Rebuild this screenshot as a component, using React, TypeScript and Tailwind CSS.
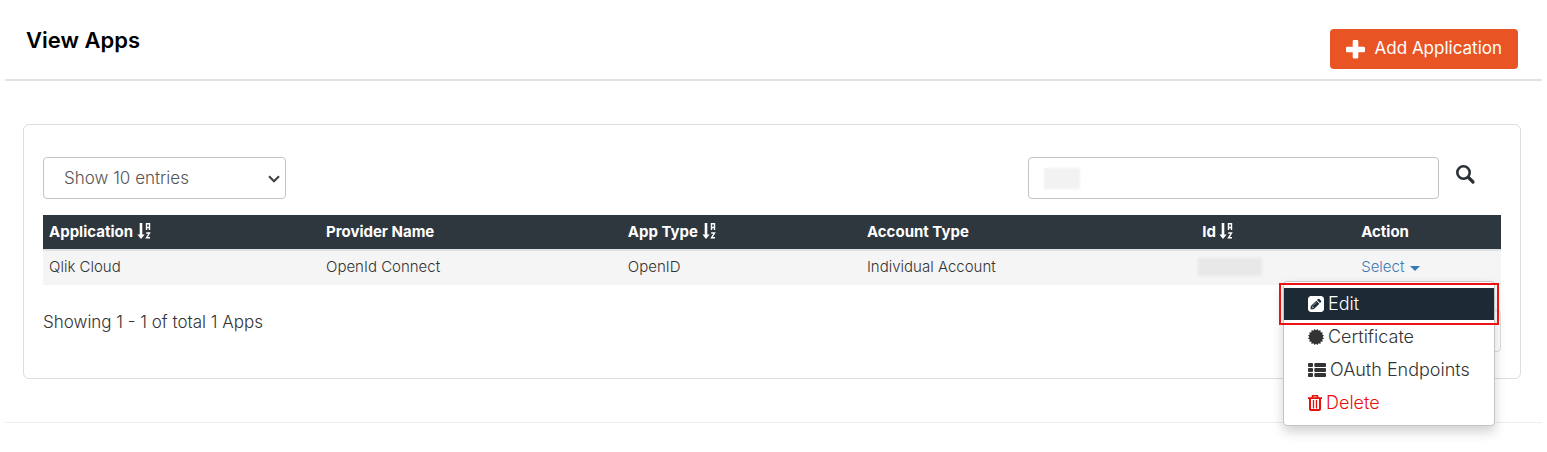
import type { ReactNode } from "react";

const columns = [
  { title: "Application", width: "w-[19%]", sortable: true },
  { title: "Provider Name", width: "w-[20.7%]", sortable: false },
  { title: "App Type", width: "w-[16.4%]", sortable: true },
  { title: "Account Type", width: "w-[23%]", sortable: false },
  { title: "Id", width: "w-[10.9%]", sortable: true },
  { title: "Action", width: "w-[10%]", sortable: false },
];

function PlusIcon() {
  return (
    <svg viewBox="0 0 19 19" className="size-[19px] shrink-0" fill="currentColor" aria-hidden="true">
      <path d="M8 0h3a1.300 1.300 0 0 1 1.300 1.300v5.400h5.400a1.300 1.300 0 0 1 1.300 1.300v3a1.300 1.300 0 0 1-1.300 1.300h-5.400v4.900a1.300 1.300 0 0 1-1.300 1.300H8a1.300 1.300 0 0 1-1.300-1.300v-4.900H1.300a1.300 1.300 0 0 1-1.300-1.300V8a1.300 1.300 0 0 1 1.300-1.300h5.400V1.300A1.300 1.300 0 0 1 8 0z" />
    </svg>
  );
}

function SearchIcon() {
  return (
    <svg viewBox="0 0 20 20" className="size-5" fill="none" stroke="currentColor" aria-hidden="true">
      <circle cx="7.500" cy="7.500" r="6.200" strokeWidth="2.600" />
      <path d="M12.500 12.500l4.500 4.500" strokeWidth="3.200" strokeLinecap="round" />
    </svg>
  );
}

function SortIcon() {
  return (
    <svg viewBox="0 0 14 17" className="inline-block h-[17px] w-[14px] align-[-3px]" aria-hidden="true">
      <path d="M2.700 0h2.600v11.500h2.400L4 16 .4 11.500h2.300z" fill="currentColor" />
      <path
        d="M9.500 7V.800h3v6.200M9.500 4.500h3M9.200 10h3.300L9.500 14.800h3.500"
        fill="none"
        stroke="currentColor"
        strokeWidth="1.400"
      />
    </svg>
  );
}

function EditIcon() {
  return (
    <svg viewBox="0 128 1536 1536" className="size-4" fill="currentColor" aria-hidden="true">
      <path d="M404 1108l152 152-52 52h-56v-96h-96v-56zm414-390q14 13-3 30l-291 291q-17 17-30 3-14-13 3-30l291-291q17-17 30-3zm-274 690l544-544-288-288-544 544v288h288zm608-608l92-92q28-28 28-68t-28-68l-152-152q-28-28-68-28t-68 28l-92 92zm384-384v960q0 119-84.500 203.500t-203.500 84.500h-960q-119 0-203.500-84.500t-84.500-203.500v-960q0-119 84.500-203.500t203.500-84.500h960q119 0 203.500 84.500t84.500 203.500z" />
    </svg>
  );
}

function CertificateIcon() {
  return (
    <svg viewBox="0 0 16 16" className="size-4" fill="currentColor" aria-hidden="true">
      <path d="M8 1.300 9.500 0l1 1.800 2-.7.100 2.200 2.200.1-.6 2.100 1.800 1-1.400 1.500 1.400 1.500-1.800 1 .6 2.100-2.200.1-.1 2.200-2-.7-1 1.800L8 14.700 6.500 16l-1-1.800-2 .7-.1-2.200-2.200-.1.600-2.100-1.800-1L1.400 8 0 6.500l1.800-1-.6-2.100 2.200-.1.100-2.200 2 .7 1-1.800z" />
    </svg>
  );
}

function ListIcon() {
  return (
    <svg viewBox="0 0 18 14" className="h-[14px] w-[18px]" fill="currentColor" aria-hidden="true">
      <rect x="0" y="0" width="5" height="4" rx="1" />
      <rect x="6.300" y="0" width="11.700" height="4" rx="1" />
      <rect x="0" y="5" width="5" height="4" rx="1" />
      <rect x="6.300" y="5" width="11.700" height="4" rx="1" />
      <rect x="0" y="10" width="5" height="4" rx="1" />
      <rect x="6.300" y="10" width="11.700" height="4" rx="1" />
    </svg>
  );
}

function TrashIcon() {
  return (
    <svg viewBox="0 0 14 16" className="h-4 w-[14px]" fill="none" stroke="currentColor" aria-hidden="true">
      <path d="M0 3.200h14M4.500 3V1.500q0-.8.800-.8h3.400q.8 0 .8.800V3" strokeWidth="1.800" />
      <path d="M2 3.500v10.500q0 1 1 1h8q1 0 1-1V3.500" strokeWidth="2" />
      <path d="M5.500 5v8.500M8.500 5v8.500" strokeWidth="1.300" />
    </svg>
  );
}

function MenuItem({ icon, className, children }: { icon: ReactNode; className: string; children: ReactNode }) {
  return (
    <li>
      <a href="#" className={`flex h-8 items-center gap-1 pl-6 text-lg font-light ${className}`}>
        {icon}
        {children}
      </a>
    </li>
  );
}

function ActionMenu() {
  return (
    <div className="relative">
      <button type="button" className="flex items-center gap-[6px] text-[#3d79b5]">
        Select
        <span className="mt-[2px] border-x-[5px] border-t-[5px] border-x-transparent border-t-[#337ab7]" />
      </button>
      <div className="absolute top-full right-0 z-10 mt-1 w-[212px] rounded border border-[#c4c4c4] bg-white py-[6px] shadow-[0_6px_12px_rgba(0,0,0,0.18)]">
        <ul className="flex flex-col gap-px">
          <MenuItem icon={<EditIcon />} className="bg-[#1c2a35] text-white">
            Edit
          </MenuItem>
          <MenuItem icon={<CertificateIcon />} className="text-[#333]">
            Certificate
          </MenuItem>
          <MenuItem icon={<ListIcon />} className="text-[#333]">
            OAuth Endpoints
          </MenuItem>
          <MenuItem icon={<TrashIcon />} className="text-[#e8100c]">
            Delete
          </MenuItem>
        </ul>
        <div className="pointer-events-none absolute -inset-x-[5px] top-px h-[42px] border-2 border-[#ee1111]" />
      </div>
    </div>
  );
}

export default function App() {
  return (
    <main className="min-h-screen px-[5px] font-['Inter',sans-serif] text-[#333]">
      <header className="flex h-[81px] items-start justify-between border-b-2 border-[#e2e2e2] pr-6 pl-[21px]">
        <h1 className="pt-6 text-[22px] leading-8 font-semibold text-black">View Apps</h1>
        <button
          type="button"
          className="mt-[29px] flex h-10 items-center gap-[10px] rounded bg-[#e95424] px-4 text-[17px] text-white"
        >
          <PlusIcon />
          Add Application
        </button>
      </header>

      <section className="mt-[43px] mr-[21px] ml-[18px] rounded-md border border-[#ddd] px-[19px] pt-8 pb-[26px]">
        <div className="flex justify-between">
          <div className="relative w-[243px]">
            <select
              aria-label="Entries per page"
              className="h-[42px] w-full appearance-none rounded border border-[#c4c4c4] bg-white pt-px pl-5 text-[17px] font-light text-[#555]"
            >
              <option>Show 10 entries</option>
            </select>
            <svg
              viewBox="0 0 12 8"
              className="pointer-events-none absolute top-[18px] right-[6px] h-2 w-3"
              fill="none"
              stroke="#444"
              strokeWidth="2.200"
              aria-hidden="true"
            >
              <path d="M1 1.300l5 5 5-5" />
            </svg>
          </div>
          <form className="flex items-start gap-[17px] pr-[25px]">
            <div className="relative">
              <input
                type="search"
                aria-label="Search apps"
                className="h-[42px] w-[411px] rounded border border-[#c4c4c4] px-4 text-[17px]"
              />
              <span className="pointer-events-none absolute top-[11px] left-4 h-[21px] w-9 bg-[#f2f2f2] blur-[1px]" />
            </div>
            <button type="button" aria-label="Search" className="mt-2 text-[#2b3036]">
              <SearchIcon />
            </button>
          </form>
        </div>

        <table className="mt-4 w-full table-fixed text-left text-[15px] leading-5">
          <thead className="bg-[#2e363e] text-white">
            <tr className="h-[35px]">
              {columns.map((column) => (
                <th key={column.title} scope="col" className={`px-[6px] font-bold ${column.width}`}>
                  {column.title} {column.sortable && <SortIcon />}
                </th>
              ))}
            </tr>
          </thead>
          <tbody>
            <tr className="h-[35px] border-t-2 border-[#e0e2e4] bg-[#f5f5f5] font-light">
              <td className="px-[6px] pb-[2px]">Qlik Cloud</td>
              <td className="px-[6px] pb-[2px]">OpenId Connect</td>
              <td className="px-[6px] pb-[2px]">OpenID</td>
              <td className="px-[6px] pb-[2px]">Individual Account</td>
              <td className="px-[2px] pb-[2px]">
                <div className="h-[18px] w-16 bg-[#e8e8e8] blur-[1px]" />
              </td>
              <td className="px-[6px] pb-[2px]">
                <ActionMenu />
              </td>
            </tr>
          </tbody>
        </table>

        <div className="flex items-start justify-between pt-[25px]">
          <p className="text-[17px] leading-6 font-light">Showing 1 - 1 of total 1 Apps</p>
          <div className="h-[42px] w-20 rounded border border-[#ddd]" />
        </div>
      </section>

      <hr className="mt-[43px] border-[#eee]" />
    </main>
  );
}
